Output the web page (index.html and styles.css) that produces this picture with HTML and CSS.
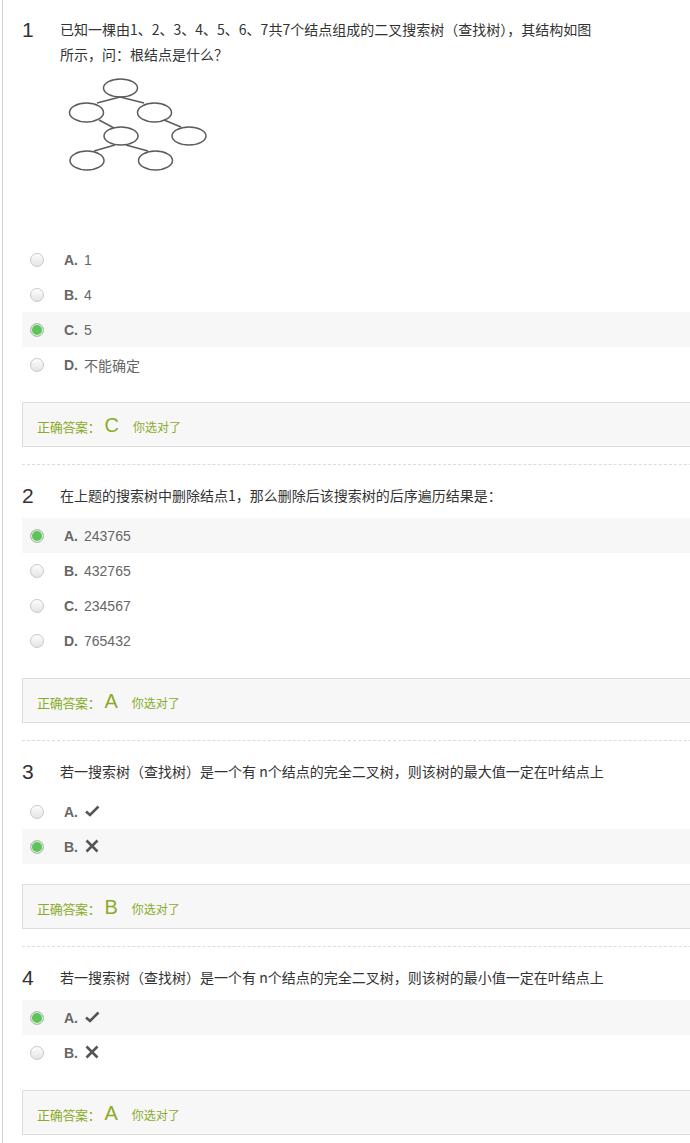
FILE: index.html
```html
<!DOCTYPE html>
<html lang="zh-CN">
<head>
    <meta charset="UTF-8">
    <meta name="viewport" content="width=device-width, initial-scale=1.0">
    <title>作业详情</title>
    <link rel="stylesheet" href="styles.css">
</head>
<body>

    <div class="wrap">

        <!-- 第1题 -->
        <div class="question first">
            <div class="q-head">
                <span class="q-num">1</span>
                <div class="q-text">已知一棵由1、2、3、4、5、6、7共7个结点组成的二叉搜索树（查找树），其结构如图<br>所示，问：根结点是什么？</div>
            </div>
            <div class="q-figure">
                <svg width="160" height="110" viewBox="0 0 160 110">
                    <g fill="none" stroke="#5c5c5c" stroke-width="1.5">
                        <line x1="60" y1="30" x2="37" y2="36"/>
                        <line x1="60" y1="30" x2="84" y2="36"/>
                        <line x1="39" y1="53" x2="54" y2="61"/>
                        <line x1="104" y1="53" x2="121" y2="60"/>
                        <line x1="55" y1="78" x2="34" y2="84"/>
                        <line x1="66" y1="78" x2="88" y2="84"/>
                        <ellipse cx="60.5" cy="21" rx="17" ry="9"/>
                        <ellipse cx="26.5" cy="45.5" rx="17" ry="9.5"/>
                        <ellipse cx="94.5" cy="45.5" rx="17" ry="9.5"/>
                        <ellipse cx="61" cy="69" rx="17" ry="9"/>
                        <ellipse cx="129" cy="69" rx="17" ry="9"/>
                        <ellipse cx="27" cy="93.5" rx="17" ry="9.5"/>
                        <ellipse cx="95.5" cy="93.5" rx="17" ry="9.5"/>
                    </g>
                </svg>
            </div>
            <ul class="options">
                <li class="option"><span class="radio"></span><span class="opt-label">A.</span><span class="opt-value">1</span></li>
                <li class="option"><span class="radio"></span><span class="opt-label">B.</span><span class="opt-value">4</span></li>
                <li class="option checked"><span class="radio"></span><span class="opt-label">C.</span><span class="opt-value">5</span></li>
                <li class="option"><span class="radio"></span><span class="opt-label">D.</span><span class="opt-value">不能确定</span></li>
            </ul>
            <div class="answer">
                <span class="answer-title">正确答案：</span>
                <span class="answer-key">C</span>
                <span class="answer-note">你选对了</span>
            </div>
        </div>

        <!-- 第2题 -->
        <div class="question">
            <div class="q-head">
                <span class="q-num">2</span>
                <div class="q-text">在上题的搜索树中删除结点1，那么删除后该搜索树的后序遍历结果是：</div>
            </div>
            <ul class="options">
                <li class="option checked"><span class="radio"></span><span class="opt-label">A.</span><span class="opt-value">243765</span></li>
                <li class="option"><span class="radio"></span><span class="opt-label">B.</span><span class="opt-value">432765</span></li>
                <li class="option"><span class="radio"></span><span class="opt-label">C.</span><span class="opt-value">234567</span></li>
                <li class="option"><span class="radio"></span><span class="opt-label">D.</span><span class="opt-value">765432</span></li>
            </ul>
            <div class="answer">
                <span class="answer-title">正确答案：</span>
                <span class="answer-key">A</span>
                <span class="answer-note">你选对了</span>
            </div>
        </div>

        <!-- 第3题 判断 -->
        <div class="question">
            <div class="q-head">
                <span class="q-num">3</span>
                <div class="q-text">若一搜索树（查找树）是一个有 n个结点的完全二叉树，则该树的最大值一定在叶结点上</div>
            </div>
            <ul class="options">
                <li class="option">
                    <span class="radio"></span><span class="opt-label">A.</span>
                    <svg class="judge" width="16" height="16" viewBox="0 0 16 16"><path d="M2 8.5 L6 12 L14.5 3.5" fill="none" stroke="#555" stroke-width="2.6"/></svg>
                </li>
                <li class="option checked">
                    <span class="radio"></span><span class="opt-label">B.</span>
                    <svg class="judge" width="16" height="16" viewBox="0 0 16 16"><path d="M2.5 2.5 L13.5 13.5 M13.5 2.5 L2.5 13.5" fill="none" stroke="#555" stroke-width="2.6"/></svg>
                </li>
            </ul>
            <div class="answer">
                <span class="answer-title">正确答案：</span>
                <span class="answer-key">B</span>
                <span class="answer-note">你选对了</span>
            </div>
        </div>

        <!-- 第4题 判断 -->
        <div class="question">
            <div class="q-head">
                <span class="q-num">4</span>
                <div class="q-text">若一搜索树（查找树）是一个有 n个结点的完全二叉树，则该树的最小值一定在叶结点上</div>
            </div>
            <ul class="options">
                <li class="option checked">
                    <span class="radio"></span><span class="opt-label">A.</span>
                    <svg class="judge" width="16" height="16" viewBox="0 0 16 16"><path d="M2 8.5 L6 12 L14.5 3.5" fill="none" stroke="#555" stroke-width="2.6"/></svg>
                </li>
                <li class="option">
                    <span class="radio"></span><span class="opt-label">B.</span>
                    <svg class="judge" width="16" height="16" viewBox="0 0 16 16"><path d="M2.5 2.5 L13.5 13.5 M13.5 2.5 L2.5 13.5" fill="none" stroke="#555" stroke-width="2.6"/></svg>
                </li>
            </ul>
            <div class="answer">
                <span class="answer-title">正确答案：</span>
                <span class="answer-key">A</span>
                <span class="answer-note">你选对了</span>
            </div>
        </div>

    </div>

</body>
</html>
```

FILE: styles.css
```css
body {
    margin: 0;
    background-color: #fff;
    font-family: "Liberation Sans", Arial, "Noto Sans CJK SC", sans-serif;
    color: #333;
    overflow-x: hidden;
}

.wrap {
    margin-left: 2px;
    border-left: 1px solid #cfcfcf;
    padding-left: 19px;
    width: 720px;
    min-height: 100vh;
}

.question {
    border-top: 1px dashed #dcdcdc;
    padding-top: 18px;
    padding-bottom: 17px;
}

.question.first {
    border-top: none;
    padding-top: 17px;
}

.q-head {
    display: flex;
    align-items: flex-start;
}

.q-num {
    width: 38px;
    flex-shrink: 0;
    font-size: 21px;
    line-height: 25px;
    color: #333;
}

.q-text {
    font-family: "Noto Sans CJK SC", sans-serif;
    font-size: 14px;
    line-height: 25px;
    color: #333;
}

.q-figure {
    margin-left: 38px;
    height: 165px;
}

.q-figure svg {
    display: block;
}

.options {
    list-style: none;
    margin: 10px 0 0;
    padding: 0;
}

.option {
    display: flex;
    align-items: center;
    height: 35px;
    padding-left: 8px;
    color: #666;
    font-size: 14px;
}

.option.checked {
    background-color: #f7f7f7;
}

.radio {
    width: 12px;
    height: 12px;
    border: 1px solid #c9c9c9;
    border-radius: 50%;
    background: linear-gradient(#fdfdfd, #e4e4e4);
    margin-right: 20px;
    flex-shrink: 0;
}

.option.checked .radio {
    background: #5ec35a;
    border-color: #bdbdbd;
    box-shadow: inset 0 0 0 1px #e8f3e6;
}

.opt-label {
    width: 20px;
    font-weight: bold;
    color: #666;
}

.opt-value {
    font-family: "Liberation Sans", Arial, "Noto Sans CJK SC", sans-serif;
}

.judge {
    display: block;
    margin-top: -2px;
}

.answer {
    margin-top: 20px;
    height: 45px;
    box-sizing: border-box;
    border: 1px solid #dcdcdc;
    background-color: #f7f7f7;
    padding: 11px 14px 0;
    color: #8aab28;
    display: flex;
    align-items: baseline;
}

.answer-title {
    font-family: "Noto Sans CJK SC", sans-serif;
    font-size: 13px;
    letter-spacing: -0.3px;
}

.answer-key {
    font-size: 20px;
    margin: 0 14px 0 4px;
}

.answer-note {
    font-family: "Noto Sans CJK SC", sans-serif;
    font-size: 12px;
}
```
